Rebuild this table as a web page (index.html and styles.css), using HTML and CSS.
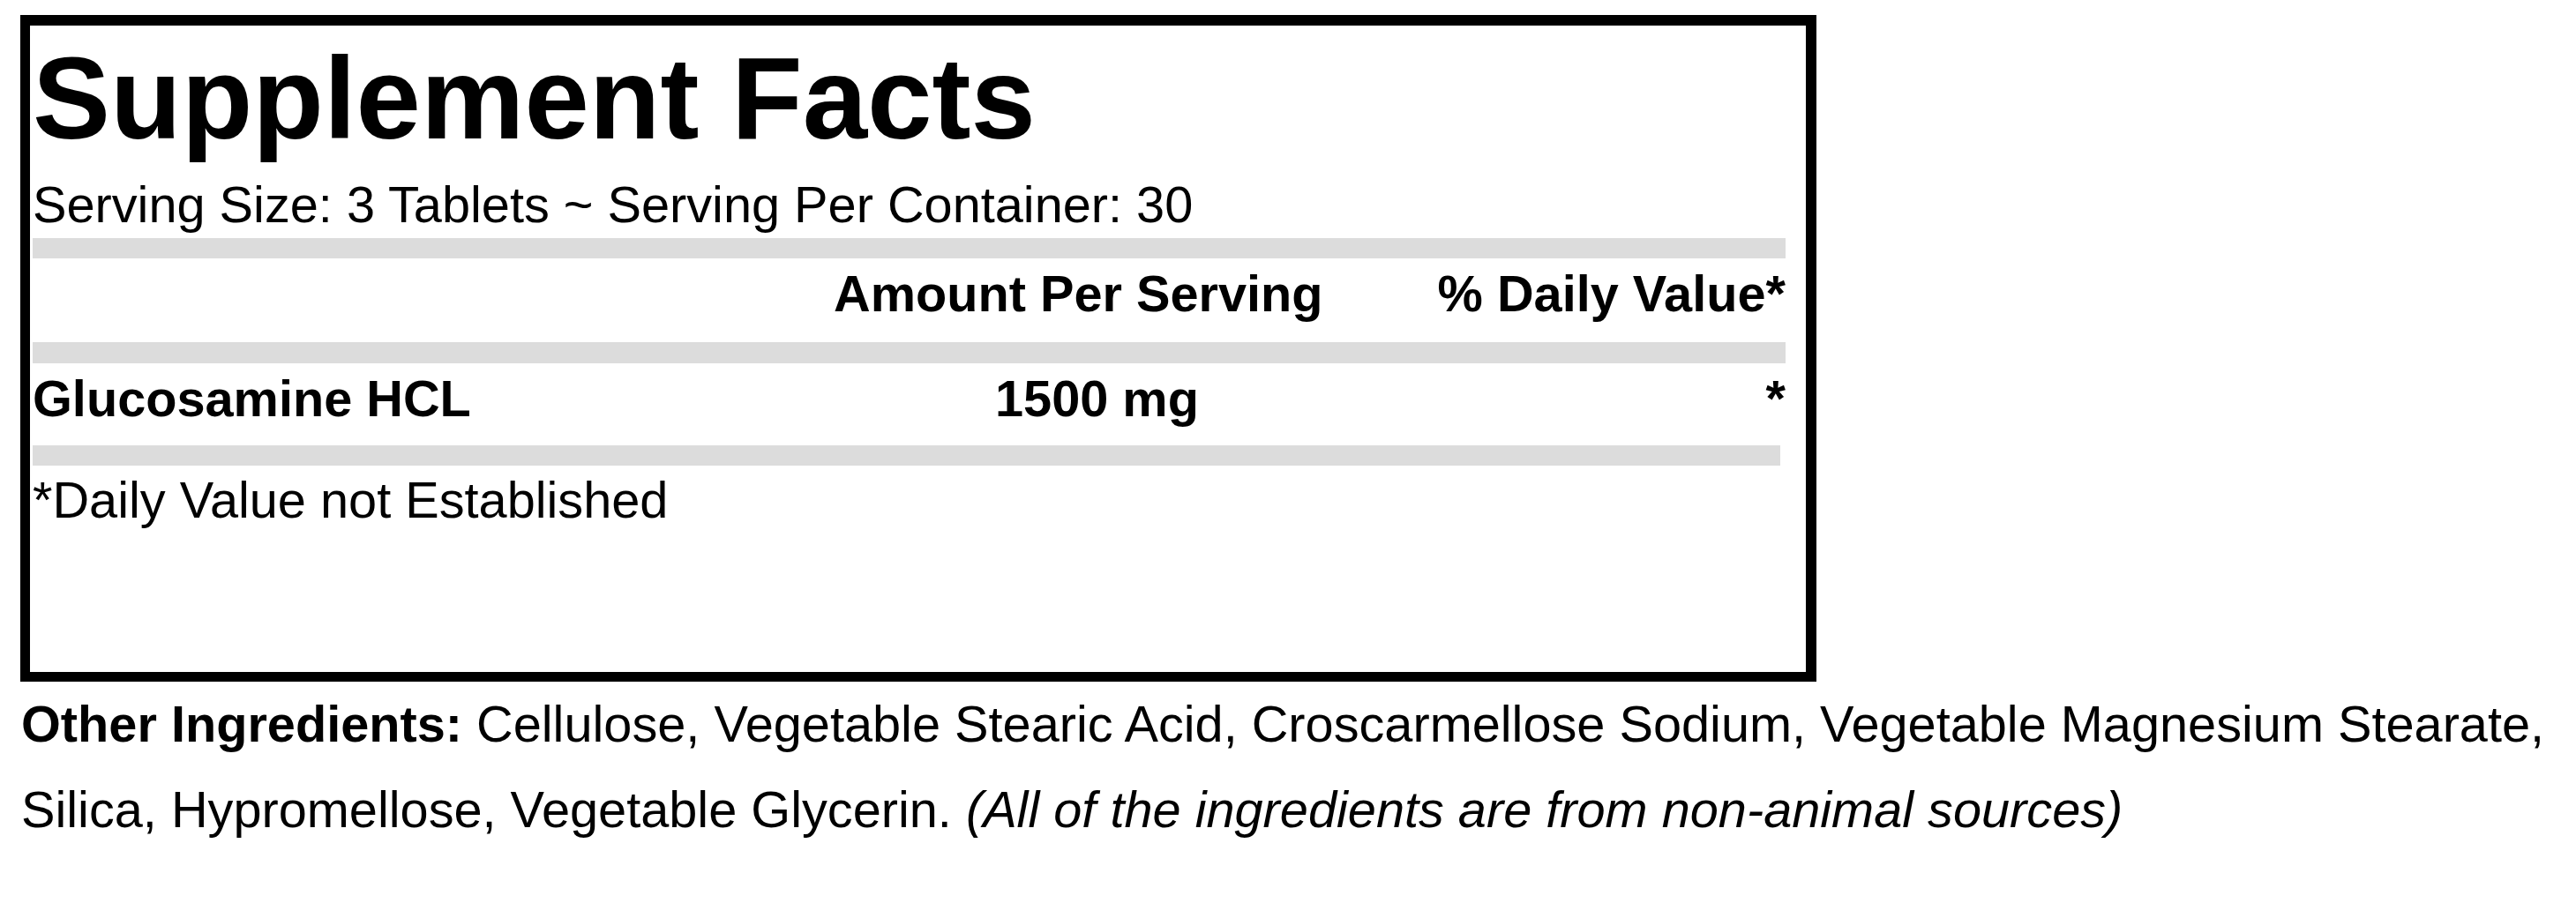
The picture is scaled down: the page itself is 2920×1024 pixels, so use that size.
FILE: index.html
```html
<!DOCTYPE html>
<html>
<head>
<meta charset="utf-8">
<link rel="stylesheet" href="styles.css">
</head>
<body>
<div class="page">
  <div class="facts">
    <h1 class="title">Supplement Facts</h1>
    <div class="serving">Serving Size: 3 Tablets ~ Serving Per Container: 30</div>
    <div class="bar"></div>
    <div class="row head">
      <div class="cell name"></div>
      <div class="cell amount">Amount Per Serving</div>
      <div class="cell dv">% Daily Value*</div>
    </div>
    <div class="bar"></div>
    <div class="row item">
      <div class="cell name">Glucosamine HCL</div>
      <div class="cell amount value">1500 mg</div>
      <div class="cell dv">*</div>
    </div>
    <div class="bar short"></div>
    <div class="note">*Daily Value not Established</div>
  </div>
  <p class="other"><b>Other Ingredients:</b> Cellulose, Vegetable Stearic Acid, Croscarmellose Sodium, Vegetable Magnesium Stearate, Silica, Hypromellose, Vegetable Glycerin. <i>(All of the ingredients are from non-animal sources)</i></p>
</div>
</body>
</html>
```
FILE: styles.css
```css
html, body {
  margin: 0;
  padding: 0;
  background: #ffffff;
}
body {
  font-family: "Liberation Sans", Arial, sans-serif;
  color: #000000;
}
.page {
  padding: 17px 0 0 23px;
}
.facts {
  box-sizing: border-box;
  width: 2036px;
  height: 756px;
  border-style: solid;
  border-color: #000000;
  border-width: 12px 12px 11px 11px;
  padding: 0 23px 0 3px;
}
.title {
  margin: 18px 0 0 0;
  font-size: 132px;
  line-height: 130px;
  font-weight: bold;
}
.serving {
  margin-top: 22px;
  font-size: 57.7px;
  line-height: 66px;
}
.bar {
  height: 23px;
  background: #dcdcdc;
}
.bar.short {
  margin-right: 6px;
}
.serving + .bar {
  margin-top: 5px;
}
.row {
  display: grid;
  grid-template-columns: 908px 1fr auto;
  font-size: 57.7px;
  line-height: 66px;
  font-weight: bold;
}
.row.head {
  padding: 7px 0 22px 0;
}
.row.item {
  padding: 7px 0 20px 0;
}
.head + .bar {
  height: 24px;
}
.dv {
  text-align: right;
}
.value {
  padding-left: 183px;
}
.note {
  margin-top: 6px;
  font-size: 57.7px;
  line-height: 66px;
}
.other {
  margin: 0;
  padding-left: 1px;
  font-size: 57.7px;
  line-height: 97px;
}
```
